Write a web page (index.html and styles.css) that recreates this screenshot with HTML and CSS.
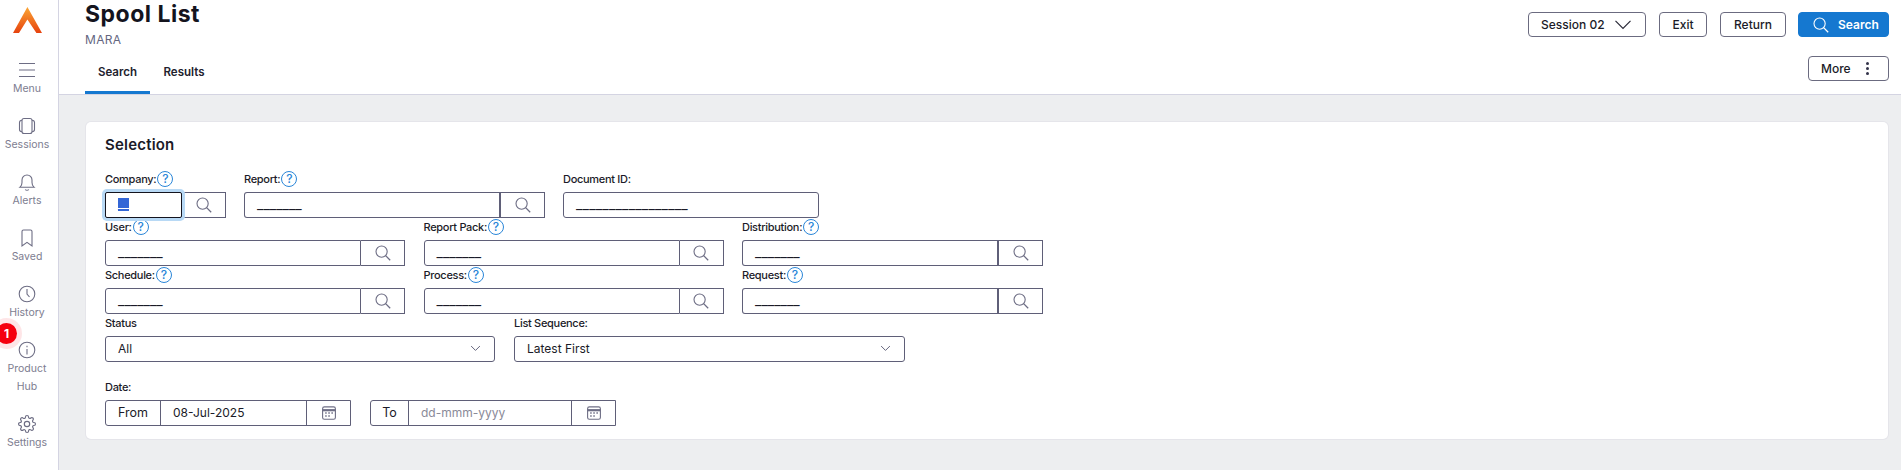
FILE: index.html
```html
<!DOCTYPE html>
<html lang="en">
<head>
<meta charset="utf-8">
<title>Spool List</title>
<link rel="stylesheet" href="styles.css">
</head>
<body>
<svg class="defs" width="0" height="0" aria-hidden="true">
  <symbol id="i-search" viewBox="0 0 16 16"><circle cx="6.6" cy="6.6" r="5.6" fill="none" stroke="currentColor" stroke-width="1.1"/><path d="M10.6 10.6l4.6 4.6" fill="none" stroke="currentColor" stroke-width="1.3"/></symbol>
  <symbol id="i-cal" viewBox="0 0 14 14"><rect x=".6" y=".9" width="12.8" height="12.4" rx="1.8" fill="none" stroke="currentColor" stroke-width="1.1"/><path d="M.6 4.2h12.8" stroke="currentColor" stroke-width="2.2"/><path d="M3.2 7h1.5M6.3 7h1.5M9.4 7h1.5M3.2 10h1.5M6.3 10h1.5" stroke="currentColor" stroke-width="1.3"/></symbol>
  <symbol id="i-chev" viewBox="0 0 12 8"><path d="M1 1.2l5 5 5-5" fill="none" stroke="currentColor"/></symbol>
</svg>
<aside class="sidebar">
  <svg class="logo" viewBox="0 0 29 26" width="29" height="26"><defs><linearGradient id="lg" x1="0" y1="0" x2="0" y2="1"><stop offset="0" stop-color="#fba635"/><stop offset="1" stop-color="#e6420e"/></linearGradient></defs><path d="M14.4 0L29 26h-5.6L14.4 12.6 6 26H0z" fill="url(#lg)"/></svg>
  <nav class="nav">
    <a class="nav-item"><svg class="nav-icon" viewBox="0 0 20 20"><path d="M2 3.5h16M2 10h16M2 16.5h16" stroke-width="1.2"/></svg><span>Menu</span></a>
    <a class="nav-item"><svg class="nav-icon" viewBox="0 0 20 20"><rect x="5" y="2.5" width="10" height="15" rx="2"/><path d="M5 4.2C3 4.4 2.5 5 2.5 6.5v7c0 1.500.5 2.100 2.500 2.300M15 4.200c2 .2 2.500.8 2.500 2.300v7c0 1.500-.5 2.100-2.500 2.300"/></svg><span>Sessions</span></a>
    <a class="nav-item"><svg class="nav-icon" viewBox="0 0 20 20"><path d="M3 15.200c1.500-1.200 2-2.500 2-4.700V8a5 5 0 0 1 10 0v2.500c0 2.200.5 3.500 2 4.700zM8.200 17.500c.8 1 2.800 1 3.600 0"/></svg><span>Alerts</span></a>
    <a class="nav-item"><svg class="nav-icon" viewBox="0 0 20 20"><path d="M5 3.500a1.500 1.500 0 0 1 1.500-1.500h7A1.500 1.500 0 0 1 15 3.500V18l-5-3.600L5 18z"/></svg><span>Saved</span></a>
    <a class="nav-item"><svg class="nav-icon" viewBox="0 0 20 20"><circle cx="10" cy="10" r="7.800"/><path d="M10 5v5l2.500 3"/></svg><span>History</span></a>
    <a class="nav-item"><span class="badge">1</span><svg class="nav-icon" viewBox="0 0 20 20"><circle cx="10" cy="10" r="7.800"/><path d="M10 9v5.500M10 5.800v1.400"/></svg><span>Product<br>Hub</span></a>
    <a class="nav-item"><svg class="nav-icon" viewBox="0 0 26 26"><g transform="translate(1 1)"><circle cx="12" cy="12" r="3.500" stroke-width="1.500"/><path stroke-width="1.500" d="M19.400 15a1.650 1.650 0 0 0 .33 1.820l.06.06a2 2 0 0 1 0 2.830 2 2 0 0 1-2.830 0l-.06-.06a1.650 1.650 0 0 0-1.820-.33 1.650 1.650 0 0 0-1 1.510V21a2 2 0 0 1-2 2 2 2 0 0 1-2-2v-.09A1.650 1.650 0 0 0 9 19.400a1.650 1.650 0 0 0-1.820.33l-.06.06a2 2 0 0 1-2.830 0 2 2 0 0 1 0-2.830l.06-.06a1.650 1.650 0 0 0 .33-1.820 1.650 1.650 0 0 0-1.510-1H3a2 2 0 0 1-2-2 2 2 0 0 1 2-2h.09A1.650 1.650 0 0 0 4.600 9a1.650 1.650 0 0 0-.33-1.820l-.06-.06a2 2 0 0 1 0-2.830 2 2 0 0 1 2.830 0l.06.06a1.650 1.650 0 0 0 1.820.33H9a1.650 1.650 0 0 0 1-1.510V3a2 2 0 0 1 2-2 2 2 0 0 1 2 2v.09a1.650 1.650 0 0 0 1 1.510 1.650 1.650 0 0 0 1.820-.33l.06-.06a2 2 0 0 1 2.830 0 2 2 0 0 1 0 2.830l-.06.06a1.650 1.650 0 0 0-.33 1.820V9a1.650 1.650 0 0 0 1.510 1H21a2 2 0 0 1 2 2 2 2 0 0 1-2 2h-.09a1.650 1.650 0 0 0-1.510 1z"/></g></svg><span>Settings</span></a>
  </nav>
</aside>
<div class="page">
  <header class="header">
    <div class="head-left">
      <h1 class="title">Spool List</h1>
      <div class="subtitle">MARA</div>
      <div class="tabs">
        <a class="tab tab-active">Search</a>
        <a class="tab">Results</a>
      </div>
    </div>
    <div class="head-right">
      <div class="actions">
        <button class="btn btn-session">Session 02<svg class="chev-lg"><use href="#i-chev"/></svg></button>
        <button class="btn btn-exit">Exit</button>
        <button class="btn btn-return">Return</button>
        <button class="btn btn-primary"><svg class="btn-search-ico"><use href="#i-search"/></svg>Search</button>
      </div>
      <button class="btn btn-more">More<span class="dots"><i></i><i></i><i></i></span></button>
    </div>
  </header>
  <main class="main">
    <section class="card">
      <h2 class="card-title">Selection</h2>
      <div class="row row-first">
        <div class="field">
          <div class="label">Company:<span class="help">?</span></div>
          <div class="group">
            <div class="box box-focus"><span class="sel">_</span></div>
            <button class="find"><svg><use href="#i-search"/></svg></button>
          </div>
        </div>
        <div class="field">
          <div class="label">Report:<span class="help">?</span></div>
          <div class="group">
            <div class="box box-join">_______</div>
            <button class="find"><svg><use href="#i-search"/></svg></button>
          </div>
        </div>
        <div class="field">
          <div class="label">Document ID:</div>
          <div class="box box-solo">_________________</div>
        </div>
      </div>
      <div class="row row-grid">
        <div class="field">
          <div class="label">User:<span class="help">?</span></div>
          <div class="group"><div class="box">_______</div><button class="find"><svg><use href="#i-search"/></svg></button></div>
        </div>
        <div class="field">
          <div class="label">Report Pack:<span class="help">?</span></div>
          <div class="group"><div class="box">_______</div><button class="find"><svg><use href="#i-search"/></svg></button></div>
        </div>
        <div class="field">
          <div class="label">Distribution:<span class="help">?</span></div>
          <div class="group"><div class="box box-join">_______</div><button class="find"><svg><use href="#i-search"/></svg></button></div>
        </div>
      </div>
      <div class="row row-grid">
        <div class="field">
          <div class="label">Schedule:<span class="help">?</span></div>
          <div class="group"><div class="box">_______</div><button class="find"><svg><use href="#i-search"/></svg></button></div>
        </div>
        <div class="field">
          <div class="label">Process:<span class="help">?</span></div>
          <div class="group"><div class="box">_______</div><button class="find"><svg><use href="#i-search"/></svg></button></div>
        </div>
        <div class="field">
          <div class="label">Request:<span class="help">?</span></div>
          <div class="group"><div class="box box-join">_______</div><button class="find"><svg><use href="#i-search"/></svg></button></div>
        </div>
      </div>
      <div class="row row-select">
        <div class="field">
          <div class="label">Status</div>
          <div class="select">All<svg class="chev"><use href="#i-chev"/></svg></div>
        </div>
        <div class="field">
          <div class="label">List Sequence:</div>
          <div class="select">Latest First<svg class="chev"><use href="#i-chev"/></svg></div>
        </div>
      </div>
      <div class="date-label label">Date:</div>
      <div class="row row-date">
        <div class="date">
          <span class="date-tag date-from">From</span>
          <span class="date-val">08-Jul-2025</span>
          <span class="date-btn"><svg><use href="#i-cal"/></svg></span>
        </div>
        <div class="date">
          <span class="date-tag date-to">To</span>
          <span class="date-val date-ph">dd-mmm-yyyy</span>
          <span class="date-btn"><svg><use href="#i-cal"/></svg></span>
        </div>
      </div>
    </section>
  </main>
</div>
</body>
</html>
```

FILE: styles.css
```css
* { box-sizing: border-box; }
html, body { margin: 0; height: 100%; overflow: hidden; }
body {
  display: flex;
  font-family: Inter, "Liberation Sans", sans-serif;
  color: #1b1b28;
  background: #edeef0;
}
.defs { position: absolute; }

/* sidebar */
.sidebar {
  width: 59px;
  flex: none;
  height: 100%;
  background: #fff;
  border-right: 1px solid #d4d4e2;
  padding-right: 4px;
  display: flex;
  flex-direction: column;
  align-items: center;
}
.logo { margin-top: 7px; margin-bottom: 27px; flex: none; }
.nav { display: flex; flex-direction: column; width: 100%; }
.nav-item {
  position: relative;
  display: flex;
  flex-direction: column;
  align-items: center;
  padding-bottom: 18px;
  font-size: 10.5px;
  line-height: 18px;
  color: #7d7d90;
  text-align: center;
}
.nav-icon {
  width: 20px;
  height: 20px;
  fill: none;
  stroke: #6d6d84;
  stroke-width: 1.1;
}
.badge {
  position: absolute;
  left: -4px;
  top: -17px;
  width: 21px;
  height: 21px;
  border-radius: 50%;
  background: #f5000f;
  box-shadow: 0 0 0 5px rgba(245, 0, 15, .1);
  color: #fff;
  font-size: 12px;
  font-weight: 700;
  line-height: 21px;
}

/* header */
.page { flex: 1; min-width: 0; display: flex; flex-direction: column; }
.header {
  height: 95px;
  flex: none;
  background: #fff;
  border-bottom: 1px solid #d4d4e2;
  display: flex;
  justify-content: space-between;
  padding: 0 12px 0 26px;
}
.title { margin: 0; font-size: 23px; line-height: 29px; font-weight: 700; letter-spacing: .5px; color: #14141e; }
.subtitle { font-size: 12px; line-height: 22px; color: #64667f; letter-spacing: .3px; }
.tabs { display: flex; margin-top: 1px; }
.tab {
  height: 42px;
  width: 65px;
  padding-top: 12px;
  text-align: center;
  font-size: 11.5px;
  line-height: 16px;
  font-weight: 600;
  color: #22222e;
}
.tab + .tab { width: 68px; }
.tab-active { border-bottom: 3px solid #1578d0; }
.head-right { display: flex; flex-direction: column; align-items: flex-end; padding-top: 12px; gap: 19px; }
.actions { display: flex; gap: 13px; }
.btn {
  height: 25px;
  padding: 0;
  display: flex;
  align-items: center;
  justify-content: center;
  background: #fff;
  border: 1px solid #6b6b80;
  border-radius: 4px;
  font: 500 12px Inter, "Liberation Sans", sans-serif;
  color: #1b1b28;
}
.btn-session { width: 118px; gap: 9px; justify-content: flex-start; padding-left: 12px; }
.chev-lg { width: 18px; height: 12px; color: #2a2a38; stroke-width: .8; }
.btn-exit { width: 48px; }
.btn-return { width: 66px; }
.btn-primary { width: 91px; gap: 9px; margin-left: -1px; background: #1578d0; border-color: #1578d0; color: #fff; font-weight: 600; justify-content: flex-start; padding-left: 14px; }
.btn-search-ico { width: 16px; height: 16px; }
.btn-more { width: 81px; gap: 15px; justify-content: flex-start; padding-left: 12px; }
.dots { display: flex; flex-direction: column; gap: 2px; }
.dots i { width: 3px; height: 3px; border-radius: 50%; background: #33334a; display: block; }

/* main */
.main { flex: 1; padding: 27px 13px 0 27px; }
.card {
  background: #fff;
  border-radius: 5px;
  box-shadow: 0 0 0 1px #e5e5ea;
  padding: 13px 19px 13px;
}
.card-title { margin: 0 0 15px; font-size: 15px; line-height: 20px; font-weight: 600; letter-spacing: .2px; }
.row { display: flex; }
.row-first { gap: 18px; }
.row-first .field:nth-child(1) { width: 121px; }
.row-first .field:nth-child(2) { width: 301px; }
.row-first .field:nth-child(3) { width: 256px; }
.row-grid .field { width: 300px; }
.row-grid { gap: 18.5px; }
.row-grid .field:last-child { width: 301px; }
.field { display: flex; flex-direction: column; }
.label {
  height: 18px;
  margin-bottom: 4px;
  display: flex;
  align-items: center;
  gap: 1px;
  font-size: 11px;
  letter-spacing: -.3px;
  font-weight: 500;
  color: #1b1b28;
}
.help {
  width: 16px;
  height: 16px;
  border: 1.5px solid #2a86d8;
  border-radius: 50%;
  color: #2a86d8;
  font-size: 12px;
  font-weight: 500;
  letter-spacing: 0;
  line-height: 13px;
  text-align: center;
  flex: none;
}
.group { display: flex; height: 26px; }
.box {
  flex: 1;
  min-width: 0;
  height: 26px;
  border: 1px solid #5f5f78;
  border-radius: 3px 0 0 3px;
  padding-left: 12px;
  font-size: 14px;
  line-height: 22px;
  color: #1b1b28;
  background: #fff;
}
.box-solo { flex: none; border-radius: 3px; letter-spacing: .2px; }
.box-focus {
  position: relative;
  border-color: #14141e;
  border-radius: 2px;
  box-shadow: 0 0 0 3px #b8d9f5;
}
.box-join { border-right-width: 2px; }
.sel {
  display: inline-block;
  width: 11px;
  height: 13px;
  line-height: 13px;
  font-size: 12px;
  vertical-align: top;
  margin-top: 5px;
  color: #3366d6;
  background: linear-gradient(#3366d6 0 10px, #fff 10px 11px, #3366d6 11px);
}
.find {
  width: 44px;
  flex: none;
  padding: 0;
  border: 1px solid #5f5f78;
  border-left: 0;
  background: #fff;
  color: #6d6d84;
  display: flex;
  align-items: center;
  justify-content: center;
}
.find svg { width: 16px; height: 16px; }
.select {
  height: 26px;
  border: 1px solid #5f5f78;
  border-radius: 3px;
  padding: 0 12px 1px;
  display: flex;
  align-items: center;
  justify-content: space-between;
  font-size: 12px;
  font-weight: 400;
}
.chev { width: 11px; height: 7px; color: #5f5f78; margin-right: 1px; stroke-width: 1.1; }
.row-select { gap: 19px; }
.row-select .field:nth-child(1) { width: 390px; }
.row-select .field:nth-child(2) { width: 391px; }
.date-label { margin-top: 16px; }
.row-date { gap: 19px; }
.date {
  width: 246px;
  height: 26px;
  display: flex;
  border: 1px solid #5f5f78;
  border-radius: 3px 0 0 3px;
  font-size: 12px;
  line-height: 24px;
}
.date-tag { text-align: center; border-right: 1px solid #5f5f78; font-size: 12.5px; line-height: 23px; }
.date-from { width: 55px; }
.date-to { width: 38px; }
.date-val { flex: 1; padding-left: 12px; }
.date-ph { color: #8a8a98; }
.date-btn {
  width: 44px;
  flex: none;
  border-left: 1px solid #5f5f78;
  color: #6d6d84;
  display: flex;
  align-items: center;
  justify-content: center;
}
.date-btn svg { width: 14px; height: 14px; }
```
